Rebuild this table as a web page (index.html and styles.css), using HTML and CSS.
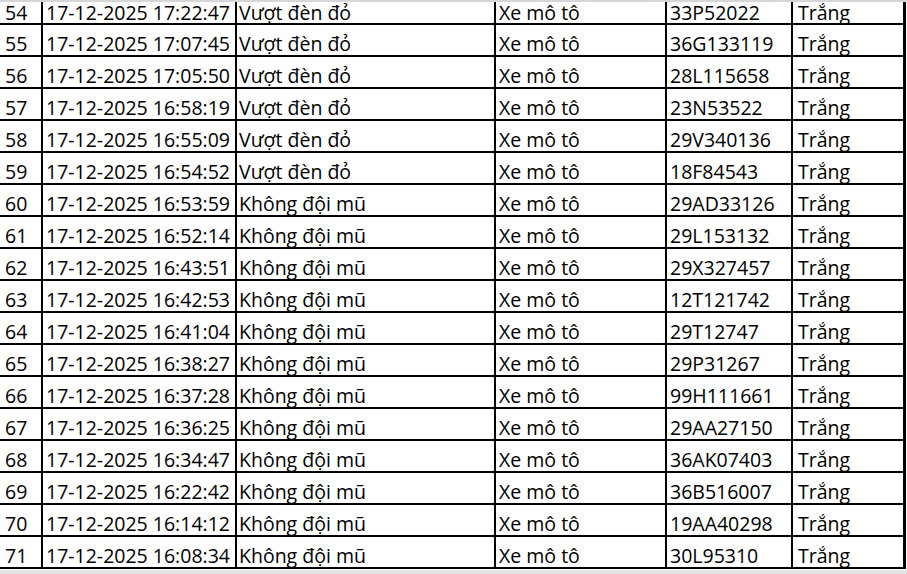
FILE: index.html
```
<!DOCTYPE html>
<html lang="vi">
<head>
<meta charset="utf-8">
<title>Danh sách vi phạm</title>
<link rel="stylesheet" href="styles.css">
</head>
<body>
<div class="top-strip"></div>
<div class="sheet">
  <div class="row first"><div class="c c1">54</div><div class="c c2">17-12-2025 17:22:47</div><div class="c c3">Vượt đèn đỏ</div><div class="c c4">Xe mô tô</div><div class="c c5">33P52022</div><div class="c c6">Trắng</div></div>
  <div class="row"><div class="c c1">55</div><div class="c c2">17-12-2025 17:07:45</div><div class="c c3">Vượt đèn đỏ</div><div class="c c4">Xe mô tô</div><div class="c c5">36G133119</div><div class="c c6">Trắng</div></div>
  <div class="row"><div class="c c1">56</div><div class="c c2">17-12-2025 17:05:50</div><div class="c c3">Vượt đèn đỏ</div><div class="c c4">Xe mô tô</div><div class="c c5">28L115658</div><div class="c c6">Trắng</div></div>
  <div class="row"><div class="c c1">57</div><div class="c c2">17-12-2025 16:58:19</div><div class="c c3">Vượt đèn đỏ</div><div class="c c4">Xe mô tô</div><div class="c c5">23N53522</div><div class="c c6">Trắng</div></div>
  <div class="row"><div class="c c1">58</div><div class="c c2">17-12-2025 16:55:09</div><div class="c c3">Vượt đèn đỏ</div><div class="c c4">Xe mô tô</div><div class="c c5">29V340136</div><div class="c c6">Trắng</div></div>
  <div class="row"><div class="c c1">59</div><div class="c c2">17-12-2025 16:54:52</div><div class="c c3">Vượt đèn đỏ</div><div class="c c4">Xe mô tô</div><div class="c c5">18F84543</div><div class="c c6">Trắng</div></div>
  <div class="row"><div class="c c1">60</div><div class="c c2">17-12-2025 16:53:59</div><div class="c c3">Không đội mũ</div><div class="c c4">Xe mô tô</div><div class="c c5">29AD33126</div><div class="c c6">Trắng</div></div>
  <div class="row"><div class="c c1">61</div><div class="c c2">17-12-2025 16:52:14</div><div class="c c3">Không đội mũ</div><div class="c c4">Xe mô tô</div><div class="c c5">29L153132</div><div class="c c6">Trắng</div></div>
  <div class="row"><div class="c c1">62</div><div class="c c2">17-12-2025 16:43:51</div><div class="c c3">Không đội mũ</div><div class="c c4">Xe mô tô</div><div class="c c5">29X327457</div><div class="c c6">Trắng</div></div>
  <div class="row"><div class="c c1">63</div><div class="c c2">17-12-2025 16:42:53</div><div class="c c3">Không đội mũ</div><div class="c c4">Xe mô tô</div><div class="c c5">12T121742</div><div class="c c6">Trắng</div></div>
  <div class="row"><div class="c c1">64</div><div class="c c2">17-12-2025 16:41:04</div><div class="c c3">Không đội mũ</div><div class="c c4">Xe mô tô</div><div class="c c5">29T12747</div><div class="c c6">Trắng</div></div>
  <div class="row"><div class="c c1">65</div><div class="c c2">17-12-2025 16:38:27</div><div class="c c3">Không đội mũ</div><div class="c c4">Xe mô tô</div><div class="c c5">29P31267</div><div class="c c6">Trắng</div></div>
  <div class="row"><div class="c c1">66</div><div class="c c2">17-12-2025 16:37:28</div><div class="c c3">Không đội mũ</div><div class="c c4">Xe mô tô</div><div class="c c5">99H111661</div><div class="c c6">Trắng</div></div>
  <div class="row"><div class="c c1">67</div><div class="c c2">17-12-2025 16:36:25</div><div class="c c3">Không đội mũ</div><div class="c c4">Xe mô tô</div><div class="c c5">29AA27150</div><div class="c c6">Trắng</div></div>
  <div class="row"><div class="c c1">68</div><div class="c c2">17-12-2025 16:34:47</div><div class="c c3">Không đội mũ</div><div class="c c4">Xe mô tô</div><div class="c c5">36AK07403</div><div class="c c6">Trắng</div></div>
  <div class="row"><div class="c c1">69</div><div class="c c2">17-12-2025 16:22:42</div><div class="c c3">Không đội mũ</div><div class="c c4">Xe mô tô</div><div class="c c5">36B516007</div><div class="c c6">Trắng</div></div>
  <div class="row"><div class="c c1">70</div><div class="c c2">17-12-2025 16:14:12</div><div class="c c3">Không đội mũ</div><div class="c c4">Xe mô tô</div><div class="c c5">19AA40298</div><div class="c c6">Trắng</div></div>
  <div class="row"><div class="c c1">71</div><div class="c c2">17-12-2025 16:08:34</div><div class="c c3">Không đội mũ</div><div class="c c4">Xe mô tô</div><div class="c c5">30L95310</div><div class="c c6">Trắng</div></div>
</div>
<div class="bottom-strip"></div>
</body>
</html>
```
FILE: styles.css
```
html, body {
  margin: 0;
  padding: 0;
  background: #ffffff;
  overflow: hidden;
}
body {
  width: 907px;
  height: 574px;
  font-family: "Open Sans", "Liberation Sans", sans-serif;
  font-size: 19.5px;
  font-weight: 500;
  color: #000000;
}
.top-strip {
  height: 2px;
  background: #d6d6d6;
}
.sheet {
  display: flex;
  flex-direction: column;
}
.row {
  display: grid;
  grid-template-columns: 43px 194px 259px 171px 126px 113px;
  height: 32px;
}
.row.first {
  height: 23px;
}
.c {
  box-sizing: border-box;
  border-right: 2px solid #000;
  border-bottom: 2px solid #000;
  display: flex;
  align-items: flex-end;
  padding: 0 0 1px 3px;
  white-space: nowrap;
  line-height: 20px;
}
.row.first .c {
  padding-bottom: 0;
}
.c1 { padding-left: 5px; }
.c2 { padding-left: 3px; }
.c3 { padding-left: 2px; }
.c4 { padding-left: 3px; }
.c5 { padding-left: 3px; }
.c6 { padding-left: 5px; border-right-width: 3px; }
.bottom-strip {
  margin-top: 1px;
  height: 10px;
  background: #e3e3e3;
}
```
